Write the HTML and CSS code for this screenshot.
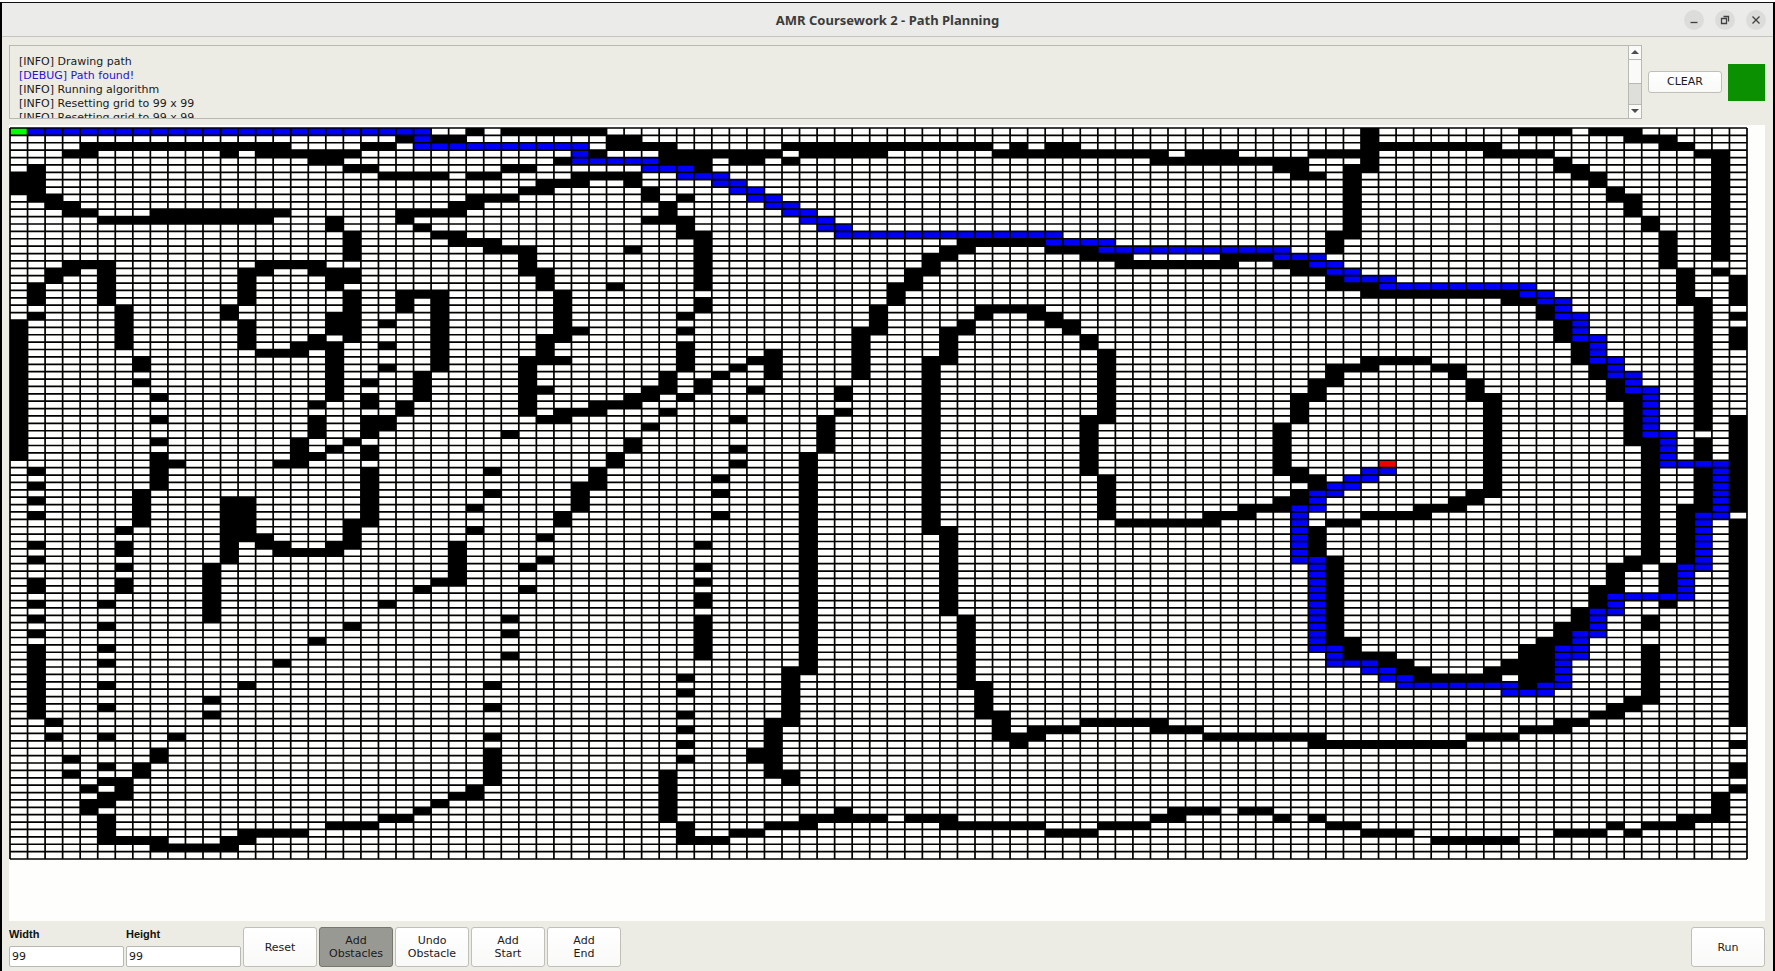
FILE: index.html
```html
<!DOCTYPE html>
<html lang="en">
<head>
<meta charset="utf-8">
<title>AMR Coursework 2 - Path Planning</title>
<link rel="stylesheet" href="styles.css">
</head>
<body>
<div class="window">
  <header class="titlebar">
    <h1 class="title">AMR Coursework 2 - Path Planning</h1>
    <div class="window-controls">
      <button class="round" type="button" aria-label="Minimize"><svg viewBox="0 0 20 20"><path d="M6.500 12.500h7"/></svg></button>
      <button class="round" type="button" aria-label="Restore"><svg viewBox="0 0 20 20"><path d="M6.500 8.500h5v5h-5zM8.500 6.500h5v5"/></svg></button>
      <button class="round" type="button" aria-label="Close"><svg viewBox="0 0 20 20"><path d="M6.500 6.500l7 7M13.500 6.500l-7 7"/></svg></button>
    </div>
  </header>

  <section class="log-row">
    <div class="log">
      <ul class="log-lines">
        <li>[INFO] Drawing path</li>
        <li class="debug">[DEBUG] Path found!</li>
        <li>[INFO] Running algorithm</li>
        <li>[INFO] Resetting grid to 99 x 99</li>
        <li>[INFO] Resetting grid to 99 x 99</li>
      </ul>
      <div class="scrollbar">
        <button class="arrow" type="button" aria-label="Scroll up"><svg viewBox="0 0 8 5"><path d="M4 0L8 4H0z"/></svg></button>
        <div class="thumb"></div>
        <div class="trough"></div>
        <button class="arrow" type="button" aria-label="Scroll down"><svg viewBox="0 0 8 5"><path d="M0 0H8L4 4z"/></svg></button>
      </div>
    </div>
    <button class="button clear" type="button">CLEAR</button>
    <div class="status"></div>
  </section>

  <main class="board">
    <svg class="grid" id="grid" viewBox="0 0 99 99" preserveAspectRatio="none" role="img" aria-label="Path planning grid"></svg>
  </main>

  <footer class="toolbar">
    <div class="field">
      <label for="width">Width</label>
      <input id="width" type="text" value="99">
    </div>
    <div class="field">
      <label for="height">Height</label>
      <input id="height" type="text" value="99">
    </div>
    <button class="button tool" type="button">Reset</button>
    <button class="button tool pressed" type="button" aria-pressed="true">Add<br>Obstacles</button>
    <button class="button tool" type="button">Undo<br>Obstacle</button>
    <button class="button tool" type="button">Add<br>Start</button>
    <button class="button tool" type="button">Add<br>End</button>
    <button class="button tool run" type="button">Run</button>
  </footer>
</div>
<script src="grid.js"></script>
</body>
</html>
```
FILE: styles.css
```css
* { box-sizing: border-box; }

body {
  display: flex;
  flex-direction: column;
  height: 100vh;
  min-height: 500px;
  margin: 0;
  padding-top: 2px;
  background: #fff;
  color: #1a1a1a;
  font-family: "DejaVu Sans", sans-serif;
  font-size: 11px;
  line-height: 14px;
}

.window {
  display: flex;
  flex: 1;
  flex-direction: column;
  min-height: 0;
  padding-bottom: 4px;
  border-top: 1px solid #111;
  border-left: 2px solid #000;
  border-right: 2px solid #000;
  background: #ecece4;
}

.titlebar {
  display: grid;
  grid-template-columns: 1fr auto 1fr;
  align-items: center;
  height: 34px;
  padding: 0 7px;
  border-bottom: 1px solid #c4c4c2;
  background: #ebebe9;
}

.title {
  grid-column: 2;
  margin: 0;
  color: #3c3c3c;
  font-family: "Noto Sans", "Open Sans", sans-serif;
  font-size: 13px;
  font-weight: 700;
}

.window-controls {
  display: flex;
  justify-content: flex-end;
  gap: 11px;
}

.round {
  width: 20px;
  height: 20px;
  padding: 0;
  border: 0;
  border-radius: 50%;
  background: #dcdcda;
}

.round svg {
  display: block;
  fill: none;
  stroke: #404040;
  stroke-width: 1.3;
}

.log-row {
  display: flex;
  align-items: center;
  gap: 6px;
  padding: 8px 8px 6px 7px;
}

.log {
  display: flex;
  flex: 1;
  height: 74px;
  border: 1px solid #b9b9b3;
}

.log-lines {
  flex: 1;
  margin: 0;
  padding: 9px 9px 0;
  overflow: hidden;
  list-style: none;
}

.debug { color: #2a10d8; }

.scrollbar {
  display: flex;
  flex-direction: column;
  width: 13px;
  border-left: 1px solid #b9b9b3;
}

.arrow {
  display: grid;
  place-items: center;
  height: 13px;
  padding: 0;
  border: 0;
  background: #fafaf8;
}

.arrow svg {
  width: 8px;
  height: 5px;
  fill: #4c4c4c;
}

.thumb {
  height: 25px;
  border-top: 1px solid #b9b9b3;
  border-bottom: 1px solid #b9b9b3;
  background: #fafaf8;
}

.trough {
  flex: 1;
  border-bottom: 1px solid #b9b9b3;
  background: #dededa;
}

.button {
  padding: 0;
  border: 1px solid #c0c0b8;
  border-radius: 3px;
  background: linear-gradient(#fff, #f9f9f8);
  color: #1a1a1a;
  font: inherit;
}

.clear {
  width: 74px;
  height: 22px;
}

.status {
  width: 37px;
  height: 37px;
  background: #0a9000;
}

.board {
  display: flex;
  flex: 1;
  min-height: 0;
  margin: 0 8px 0 7px;
  padding: 3px 18px 62px 1px;
  background: #fefefc;
}

.grid {
  flex: 1;
  min-width: 0;
  height: 100%;
  overflow: visible;
}

.obstacle { fill: #000; }
.path { fill: #0000f8; }
.start { fill: #00ff00; }
.goal { fill: #f00000; }

.lines {
  fill: none;
  stroke: #000;
  stroke-width: 1.7;
  vector-effect: non-scaling-stroke;
}

.toolbar {
  display: flex;
  gap: 2px;
  padding: 6px 8px 0 7px;
}

.field {
  display: flex;
  flex-direction: column;
  justify-content: space-between;
  width: 115px;
}

.field label {
  color: #111;
  font-family: "Liberation Sans", sans-serif;
  font-size: 11px;
  font-weight: 700;
}

.field input {
  width: 100%;
  height: 21px;
  padding: 0 2px;
  border: 1px solid #b9b9b3;
  border-radius: 2px;
  background: #fff;
  color: #1a1a1a;
  font: inherit;
}

.tool {
  width: 74px;
  height: 40px;
  line-height: 13px;
}

.pressed {
  border-color: #77776f;
  background: #999994;
}

.run { margin-left: auto; }
```
FILE: grid.js
```js
const SIZE = 99;

/* One entry per row: the columns that hold an obstacle. */
const obstacles = [
  "26 28-33 77 86-88 90-92",
  "22 24-25 34-35 77 92-94",
  "4-15 20-21 34-37 44-55 57 59-60 77-84 94-95",
  "3-4 12 14-19 33 37-43 45-49 56-65 67-69 74-77 84-87 96-97",
  "17-18 31 37-39 41-42 44 65-73 77 88 97",
  "1 19-20 28-29 39 72-73 76-77 88-89 97",
  "0-1 21-24 26-27 32-35 73-74 76 89-90 97",
  "0-1 30-32 35 76 90 97",
  "0-1 29-30 36 76 91 97",
  "1-2 26-28 36 38 76 91-92 97",
  "2-3 25-26 37 76 92 97",
  "3-4 8-15 22-25 37 76 92 97",
  "5-14 18 22 36-38 76 93 97",
  "18 23 38 76 93 97",
  "19 24-25 38-39 75-76 94 97",
  "19 25-27 39 54-58 75 94 97",
  "19 27-29 35 39 53-54 59-61 75 94 97",
  "19 29 39 52-53 61-63 69-71 94 97",
  "3-5 14-17 29 39 52 63-69 72-73 94",
  "2-3 5 13-14 17-19 29-30 39 51-52 73-74 95 97",
  "2 5 13 18-19 30 39 51 75 95 98",
  "1 5 13 18 30 34 39 50-51 75-77 95 98",
  "1 5 13 19 22-24 31 50 77-85 95 98",
  "1 5 13 19 22 24 31 39 50 85-86 95-96 98",
  "6 12 19 22 24 31 39 49 55-58 87 96",
  "1 6 12 18-19 24 31 38 49 55 58-59 87 96 98",
  "0 6 13 18-19 21 24 31 49 54 59-60 88 96",
  "0 6 13 18-19 24 31-32 38 48-49 53-54 60 88 96 98",
  "0 6 13 17 19 24 30-31 48 53 61 88 96 98",
  "0 6 13 16-18 21 24 30 38 48 53 61 89 96 98",
  "0 14-16 18 24 30 38 43 48 53 62 89 96",
  "0 7 18 24 29-31 38 42-43 48 52-53 62 77-80 89 96",
  "0 7 18 21 24 29 38 41 43 48 52 62 75-77 81-82 90 96",
  "0 18 23 29 37 40 43 48 52 62 75 82 90 96",
  "0 7 18 20 23 29 37 39 52 62 74-75 83 91 96",
  "0 18 23 29-30 36-37 39 42 47 52 62 74 83 91 96",
  "0 8 18 20 23 29 35-36 38 47 52 62 73-74 83-84 91-92 96",
  "0 17 20 22 29 33-35 52 62 73 84 92 96",
  "0 22 29 31-33 37 47 52 62 73 84 92 96",
  "0 8 17 20-21 30-31 41 46 52 61-62 73 84 92 96 98",
  "0 17 20-21 36 46 52 61 72 84 92 96 98",
  "0 17 20 28 46 52 61 72 84 92 98",
  "0 8 16 19 35 46 52 61 72 84 92-93 96 98",
  "0 16 18 20 35 41 46 52 61 72 84 93 96 98",
  "0 8 16-17 20 34 45 52 61 72 84 93 96 98",
  "8-9 15-16 34 41 45 52 61 72 84 93 98",
  "1 8 20 33 27 45 52 61 72-73 84 93 96 98",
  "8 20 33 40 45 52 62 73-74 84 93 96 98",
  "1 8 20 32-33 45 52 62 74 84 93 96 98",
  "7 20 27 32 40 45 52 62 73 83-84 93 96 98",
  "1 7 12-13 20 32 45 52 62 72-73 82-83 93 96 98",
  "7 12-13 20 26 32 45 52 62 70-72 80-82 93 95-96 98",
  "1 7 12-13 20 31 40 45 52 62 68-70 77-80 93 95",
  "7 12-13 19-20 31 45 52 63-68 75-76 93 95 98",
  "6 12-13 19 26 45 52-53 74 93 95 98",
  "12-14 19 30 45 53 74 93 95 98",
  "1 6 12 14-15 18-19 25 39 45 53 74 93 95 98",
  "6 12 15-18 25 45 53 74 93 95 98",
  "1 12 25 30 45 53 75 92-93 95 98",
  "6 11 25 29 39 45 53 75 91-92 94 98",
  "11 25 45 53 75 91 94 98",
  "1 6 11 24-25 39 45 53 75 91 94 98",
  "1 6 11 23 29 45 53 75 90-91 94 98",
  "11 39 45 53 75 90 98",
  "1 5 11 21 39 45 53 75 90 94 98",
  "11 45 53 75 89 98",
  "1 11 28 39 45 54 75 89 93 98",
  "5 19 39 45 54 75 88-89 93 98",
  "1 28 39 45 54 75 88 98",
  "17 39 45 54 75-76 87-88 98",
  "1 5 39 45 54 76 86-87 93 98",
  "1 28 39 45 54 76-78 86-87 93 98",
  "1 5 15 45 54 78-79 85-87 93 98",
  "1 44-45 54 79-80 84-87 93 98",
  "1 38 44 54 80-84 86-87 93 98",
  "1 5 13 27 44 54-55 86 93 98",
  "1 38 44 55 93 98",
  "1 11 44 55 92-93 98",
  "1 5 27 44 55 91-92 98",
  "1 11 38 44 55-56 90-91 98",
  "2 43-44 56 61-65 88-89 98",
  "38 43 56 58-60 65-67 86-88",
  "2 5 9 27 43 56-58 68-74 83-85",
  "38 43 57 74-82 98",
  "8 27 42-43",
  "3 8 27 38 42-43",
  "5 7 27 43 98",
  "3 7 27 37 43-44 98",
  "5-6 27 37 44",
  "4 6 26 37 98",
  "5-6 25-26 37 97",
  "4-5 24 37 97",
  "4 23 37 47 66-68 70-71 97",
  "5 21-22 37 45-49 51-53 65-66 72 74 95-97",
  "5 18-20 38 43-45 53-58 62-64 75-76 91 93-95",
  "5 13-16 38 41-42 59-61 77-79 88-90 92",
  "5-8 12-13 38-40 81-85",
  "8-12",
  ""
];

/* Row: columns that the found path runs through. */
const path = {
  0: "1-23", 1: "23", 2: "23-32", 3: "32", 4: "32-36", 5: "36-38",
  6: "38-40", 7: "40-41", 8: "41-42", 9: "42-43", 10: "43-44",
  11: "44-45", 12: "45-46", 13: "46-47", 14: "47-59", 15: "59-62",
  16: "62-72", 17: "72-74", 18: "74-75", 19: "75-76", 20: "76-78",
  21: "78-86", 22: "86-87", 23: "87-88", 24: "88", 25: "88-89",
  26: "89", 27: "89", 28: "89-90", 29: "90", 30: "90", 31: "90-91",
  32: "91", 33: "91-92", 34: "92", 35: "92-93", 36: "93", 37: "93",
  38: "93", 39: "93", 40: "93", 41: "93-94", 42: "94", 43: "94",
  44: "94", 45: "94-97", 46: "77-78 97", 47: "76-77 97",
  48: "75-76 97", 49: "74-75 97", 50: "74 97", 51: "73-74 97",
  52: "73 96-97", 53: "73 96", 54: "73 96", 55: "73 96", 56: "73 96",
  57: "73 96", 58: "73-74 96", 59: "74 95-96", 60: "74 95",
  61: "74 95", 62: "74 95", 63: "74 91-95", 64: "74 91",
  65: "74 90-91", 66: "74 90", 67: "74 90", 68: "74 89-90",
  69: "74 89", 70: "74-75 88-89", 71: "75 88-89", 72: "75-77 88",
  73: "77-78 88", 74: "78-79 88", 75: "79-85 87-88", 76: "85-87"
};

const svg = document.getElementById("grid");

function draw(name, d) {
  const shape = document.createElementNS("http://www.w3.org/2000/svg", "path");
  shape.setAttribute("class", name);
  shape.setAttribute("d", d);
  svg.appendChild(shape);
}

function runs(text, row) {
  return text.split(" ").filter(Boolean).map(function (run) {
    const ends = run.split("-").map(Number);
    const last = ends.length > 1 ? ends[1] : ends[0];
    const wide = last - ends[0] + 1;
    return `M${ends[0]} ${row}h${wide}v1h${-wide}z`;
  }).join("");
}

draw("path", Object.keys(path).map(row => runs(path[row], Number(row))).join(""));
draw("start", runs("0", 0));
draw("goal", runs("78", 45));
draw("obstacle", obstacles.map(runs).join(""));

let lines = "";
for (let i = 0; i <= SIZE; i++) {
  lines += `M${i} 0V${SIZE}M0 ${i}H${SIZE}`;
}
draw("lines", lines);
```
